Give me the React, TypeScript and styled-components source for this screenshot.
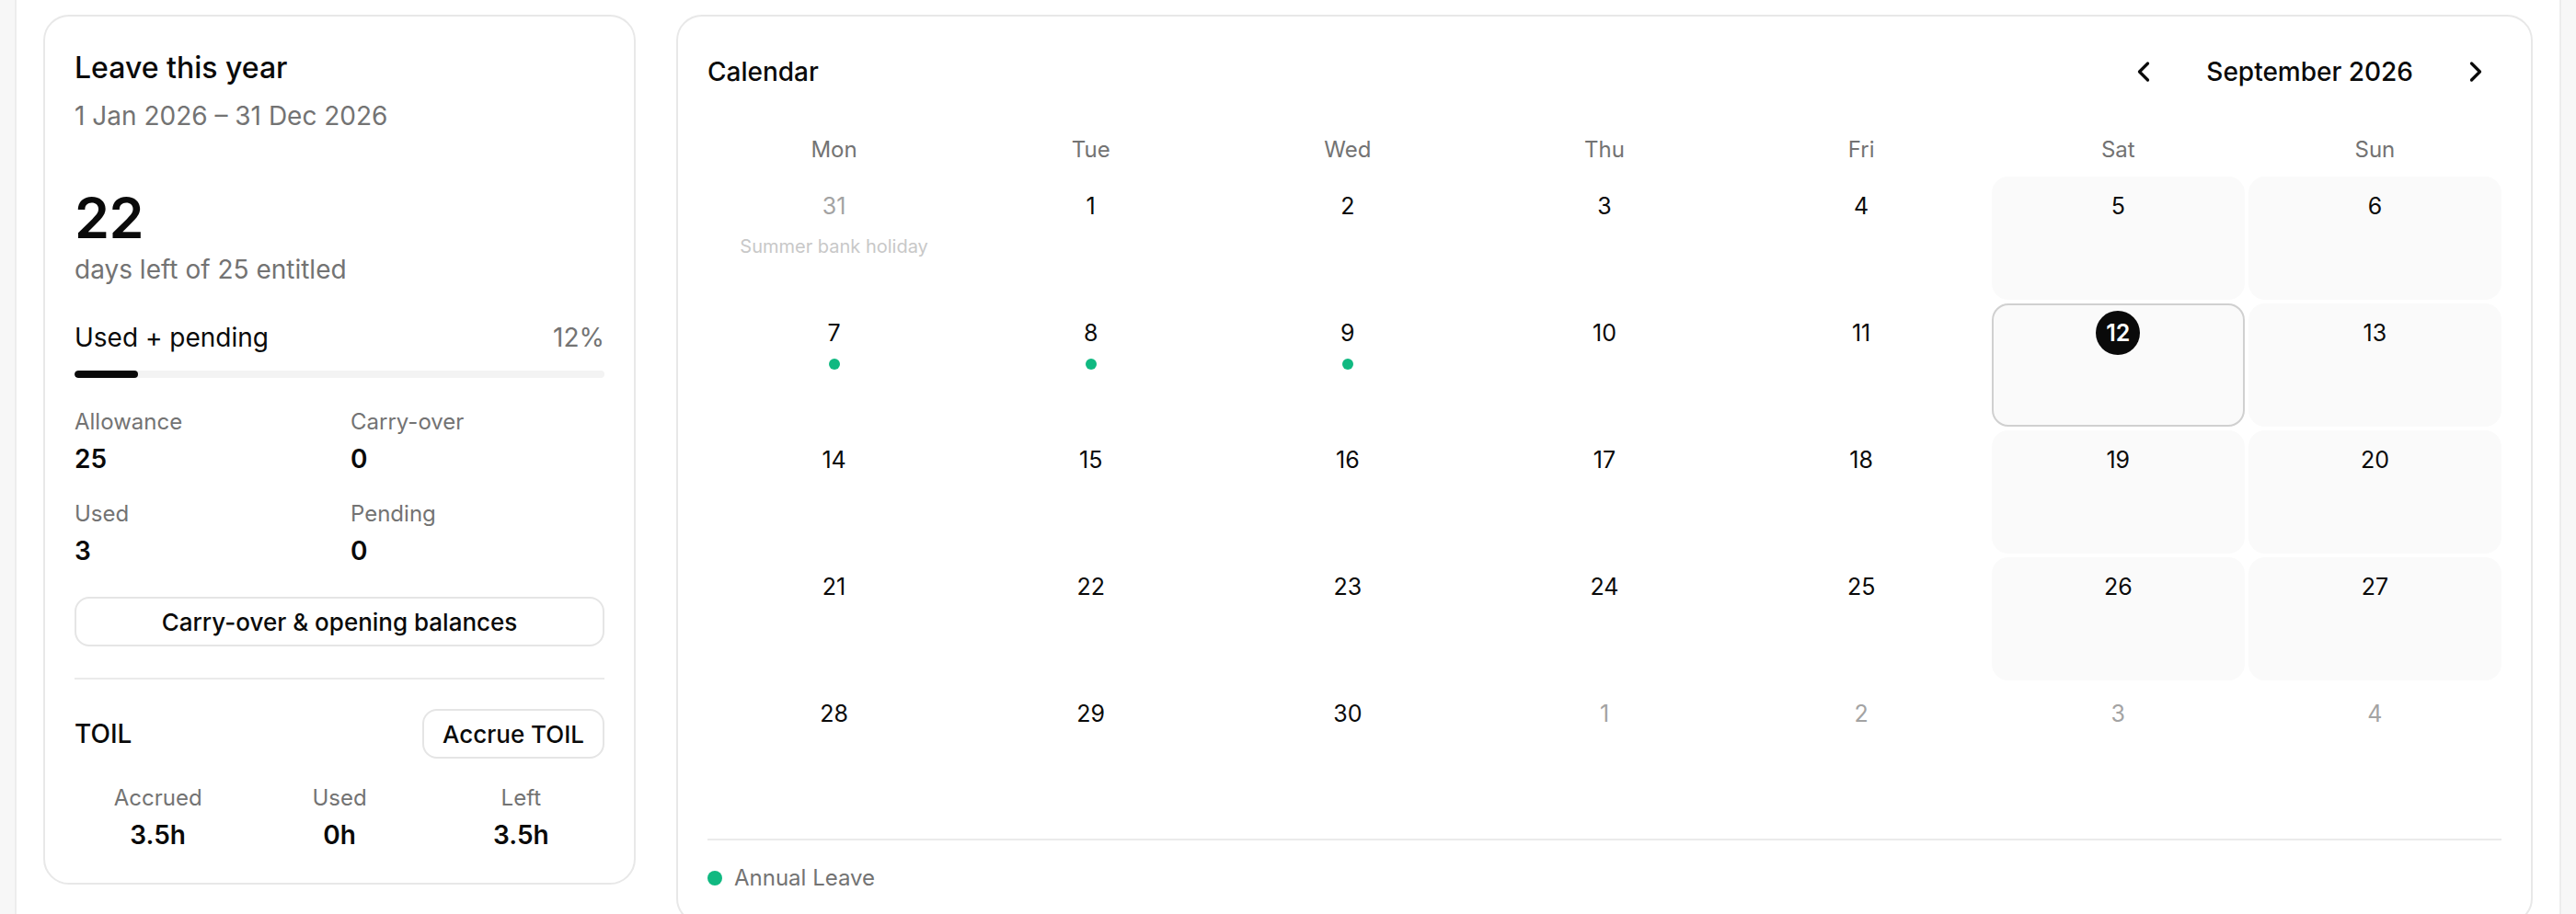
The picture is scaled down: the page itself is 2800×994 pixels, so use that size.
import React from 'react';
import styled, { createGlobalStyle } from 'styled-components';
import { ChevronLeft, ChevronRight } from 'lucide-react';

type Day = {
  label: number;
  outside?: boolean;
  weekend?: boolean;
  today?: boolean;
  leave?: boolean;
  note?: string;
};

const WEEKDAYS = ['Mon', 'Tue', 'Wed', 'Thu', 'Fri', 'Sat', 'Sun'];
const LEAVE_DAYS = [7, 8, 9];
const TODAY = 12;

// September 2026 starts on a Tuesday
const buildMonth = (): Day[] => {
  const days: Day[] = [{ label: 31, outside: true, note: 'Summer bank holiday' }];
  for (let d = 1; d <= 30; d++) {
    const col = days.length % 7;
    days.push({
      label: d,
      weekend: col >= 5,
      today: d === TODAY,
      leave: LEAVE_DAYS.includes(d),
    });
  }
  let next = 1;
  while (days.length % 7 !== 0) days.push({ label: next++, outside: true });
  return days;
};

export default function App() {
  const days = buildMonth();

  return (
    <>
      <GlobalStyle />
      <Page>
        <Card>
          <Title>Leave this year</Title>
          <Period>1 Jan 2026 – 31 Dec 2026</Period>

          <BigNumber>22</BigNumber>
          <Muted>days left of 25 entitled</Muted>

          <UsageRow>
            <span>Used + pending</span>
            <Percent>12%</Percent>
          </UsageRow>
          <Track>
            <Fill style={{ width: '12%' }} />
          </Track>

          <StatGrid>
            <Stat>
              <StatLabel>Allowance</StatLabel>
              <StatValue>25</StatValue>
            </Stat>
            <Stat>
              <StatLabel>Carry-over</StatLabel>
              <StatValue>0</StatValue>
            </Stat>
            <Stat>
              <StatLabel>Used</StatLabel>
              <StatValue>3</StatValue>
            </Stat>
            <Stat>
              <StatLabel>Pending</StatLabel>
              <StatValue>0</StatValue>
            </Stat>
          </StatGrid>

          <WideButton>Carry-over &amp; opening balances</WideButton>

          <Divider />

          <ToilHeader>
            <span>TOIL</span>
            <SmallButton>Accrue TOIL</SmallButton>
          </ToilHeader>

          <ToilStats>
            <Stat>
              <StatLabel>Accrued</StatLabel>
              <ToilValue>3.5h</ToilValue>
            </Stat>
            <Stat>
              <StatLabel>Used</StatLabel>
              <ToilValue>0h</ToilValue>
            </Stat>
            <Stat>
              <StatLabel>Left</StatLabel>
              <ToilValue>3.5h</ToilValue>
            </Stat>
          </ToilStats>
        </Card>

        <Card>
          <CalHeader>
            <CalTitle>Calendar</CalTitle>
            <MonthNav>
              <NavButton aria-label="Previous month">
                <ChevronLeft size={36} strokeWidth={2.2} />
              </NavButton>
              <MonthLabel>September 2026</MonthLabel>
              <NavButton aria-label="Next month">
                <ChevronRight size={36} strokeWidth={2.2} />
              </NavButton>
            </MonthNav>
          </CalHeader>

          <WeekdayRow>
            {WEEKDAYS.map((w) => (
              <Weekday key={w}>{w}</Weekday>
            ))}
          </WeekdayRow>

          <DaysGrid>
            {days.map((d, i) => (
              <DayCell key={i} $weekend={!!d.weekend} $today={!!d.today}>
                <DayNumber $outside={!!d.outside} $today={!!d.today}>
                  {d.label}
                </DayNumber>
                {d.leave && <LeaveDot />}
                {d.note && <HolidayNote>{d.note}</HolidayNote>}
              </DayCell>
            ))}
          </DaysGrid>

          <LegendDivider />
          <Legend>
            <LegendDot />
            <span>Annual Leave</span>
          </Legend>
        </Card>
      </Page>
    </>
  );
}

const GlobalStyle = createGlobalStyle`
  html, body {
    margin: 0;
    padding: 0;
    background: #f7f7f7;
  }
  body {
    font-family: Inter, "Noto Sans", "Liberation Sans", sans-serif;
    color: #0a0a0a;
    -webkit-font-smoothing: antialiased;
  }
  * { box-sizing: border-box; }
`;

const Page = styled.main`
  margin: 0 16px;
  height: 994px;
  overflow: hidden;
  background: #fff;
  border-left: 2px solid #ededed;
  border-right: 2px solid #ededed;
  padding: 16px 29px 0;
  display: grid;
  grid-template-columns: 644px 1fr;
  column-gap: 44px;
  align-items: start;
`;

const Card = styled.section`
  background: #fff;
  border: 2px solid #e8e8e8;
  border-radius: 28px;
  padding: 32px;
`;

const Title = styled.h2`
  margin: 0;
  font-size: 32px;
  line-height: 48px;
  font-weight: 500;
`;

const Period = styled.div`
  margin-top: 8px;
  font-size: 28px;
  line-height: 40px;
  color: #737373;
`;

const BigNumber = styled.div`
  margin-top: 55px;
  font-size: 61px;
  line-height: 72px;
  font-weight: 600;
  letter-spacing: -0.5px;
`;

const Muted = styled.div`
  font-size: 28px;
  line-height: 40px;
  color: #737373;
`;

const UsageRow = styled.div`
  margin-top: 34px;
  display: flex;
  justify-content: space-between;
  align-items: center;
  font-size: 28px;
  line-height: 40px;
`;

const Percent = styled.span`
  color: #737373;
`;

const Track = styled.div`
  margin-top: 16px;
  height: 8px;
  border-radius: 4px;
  background: #f3f3f3;
  overflow: hidden;
`;

const Fill = styled.div`
  height: 100%;
  border-radius: 4px;
  background: #0a0a0a;
`;

const StatGrid = styled.div`
  margin-top: 32px;
  display: grid;
  grid-template-columns: 1fr 1fr;
  column-gap: 24px;
  row-gap: 24px;
`;

const Stat = styled.div`
  display: flex;
  flex-direction: column;
`;

const StatLabel = styled.span`
  font-size: 24px;
  line-height: 32px;
  color: #737373;
`;

const StatValue = styled.span`
  margin-top: 4px;
  font-size: 28px;
  line-height: 40px;
  font-weight: 600;
`;

const WideButton = styled.button`
  margin-top: 30px;
  width: 100%;
  height: 54px;
  border: 2px solid #e5e5e5;
  border-radius: 16px;
  background: #fff;
  font-family: inherit;
  font-size: 26px;
  font-weight: 500;
  color: #0a0a0a;
  cursor: pointer;
`;

const Divider = styled.hr`
  margin: 34px 0 0;
  border: none;
  height: 2px;
  background: #ebebeb;
`;

const ToilHeader = styled.div`
  margin-top: 32px;
  display: flex;
  justify-content: space-between;
  align-items: center;
  font-size: 28px;
  font-weight: 500;
`;

const SmallButton = styled.button`
  height: 54px;
  padding: 0 20px;
  border: 2px solid #e5e5e5;
  border-radius: 16px;
  background: #fff;
  font-family: inherit;
  font-size: 26px;
  font-weight: 500;
  color: #0a0a0a;
  cursor: pointer;
`;

const ToilStats = styled.div`
  margin-top: 27px;
  display: grid;
  grid-template-columns: repeat(3, 1fr);
  column-gap: 16px;
  text-align: center;
`;

const ToilValue = styled.span`
  margin-top: 4px;
  font-size: 28px;
  line-height: 40px;
  font-weight: 600;
`;

const CalHeader = styled.div`
  height: 56px;
  display: flex;
  justify-content: space-between;
  align-items: center;
`;

const CalTitle = styled.h2`
  margin: 0;
  font-size: 28px;
  font-weight: 500;
`;

const MonthNav = styled.div`
  display: flex;
  align-items: center;
  gap: 40px;
`;

const NavButton = styled.button`
  width: 56px;
  height: 56px;
  display: grid;
  place-items: center;
  padding: 0;
  border: none;
  border-radius: 12px;
  background: transparent;
  color: #0a0a0a;
  cursor: pointer;
`;

const MonthLabel = styled.span`
  font-size: 28px;
  font-weight: 500;
`;

const WeekdayRow = styled.div`
  margin-top: 41px;
  display: grid;
  grid-template-columns: repeat(7, 1fr);
  gap: 4px;
`;

const Weekday = styled.div`
  text-align: center;
  font-size: 24px;
  line-height: 32px;
  color: #737373;
`;

const DaysGrid = styled.div`
  margin-top: 13px;
  display: grid;
  grid-template-columns: repeat(7, 1fr);
  grid-auto-rows: 134px;
  gap: 4px;
`;

const DayCell = styled.div<{ $weekend: boolean; $today: boolean }>`
  display: flex;
  flex-direction: column;
  align-items: center;
  padding-top: 6px;
  border-radius: 18px;
  border: 2px solid ${(p) => (p.$today ? '#d0d0d0' : 'transparent')};
  background: ${(p) => (p.$weekend || p.$today ? '#fafafa' : 'transparent')};
`;

const DayNumber = styled.span<{ $outside: boolean; $today: boolean }>`
  width: 48px;
  height: 48px;
  border-radius: 50%;
  display: grid;
  place-items: center;
  font-size: 25px;
  font-weight: ${(p) => (p.$today ? 600 : 400)};
  color: ${(p) => (p.$today ? '#fff' : p.$outside ? '#a3a3a3' : '#0a0a0a')};
  background: ${(p) => (p.$today ? '#0a0a0a' : 'transparent')};
`;

const LeaveDot = styled.span`
  margin-top: 4px;
  width: 12px;
  height: 12px;
  border-radius: 50%;
  background: #10b981;
`;

const HolidayNote = styled.span`
  margin-top: 7px;
  font-size: 20px;
  line-height: 26px;
  color: #c8c8c8;
  white-space: nowrap;
`;

const LegendDivider = styled.hr`
  margin: 34px 0 0;
  border: none;
  height: 2px;
  background: #ebebeb;
`;

const Legend = styled.div`
  margin-top: 25px;
  display: flex;
  align-items: center;
  gap: 13px;
  font-size: 24px;
  line-height: 32px;
  color: #737373;
`;

const LegendDot = styled.span`
  width: 16px;
  height: 16px;
  border-radius: 50%;
  background: #10b981;
`;
